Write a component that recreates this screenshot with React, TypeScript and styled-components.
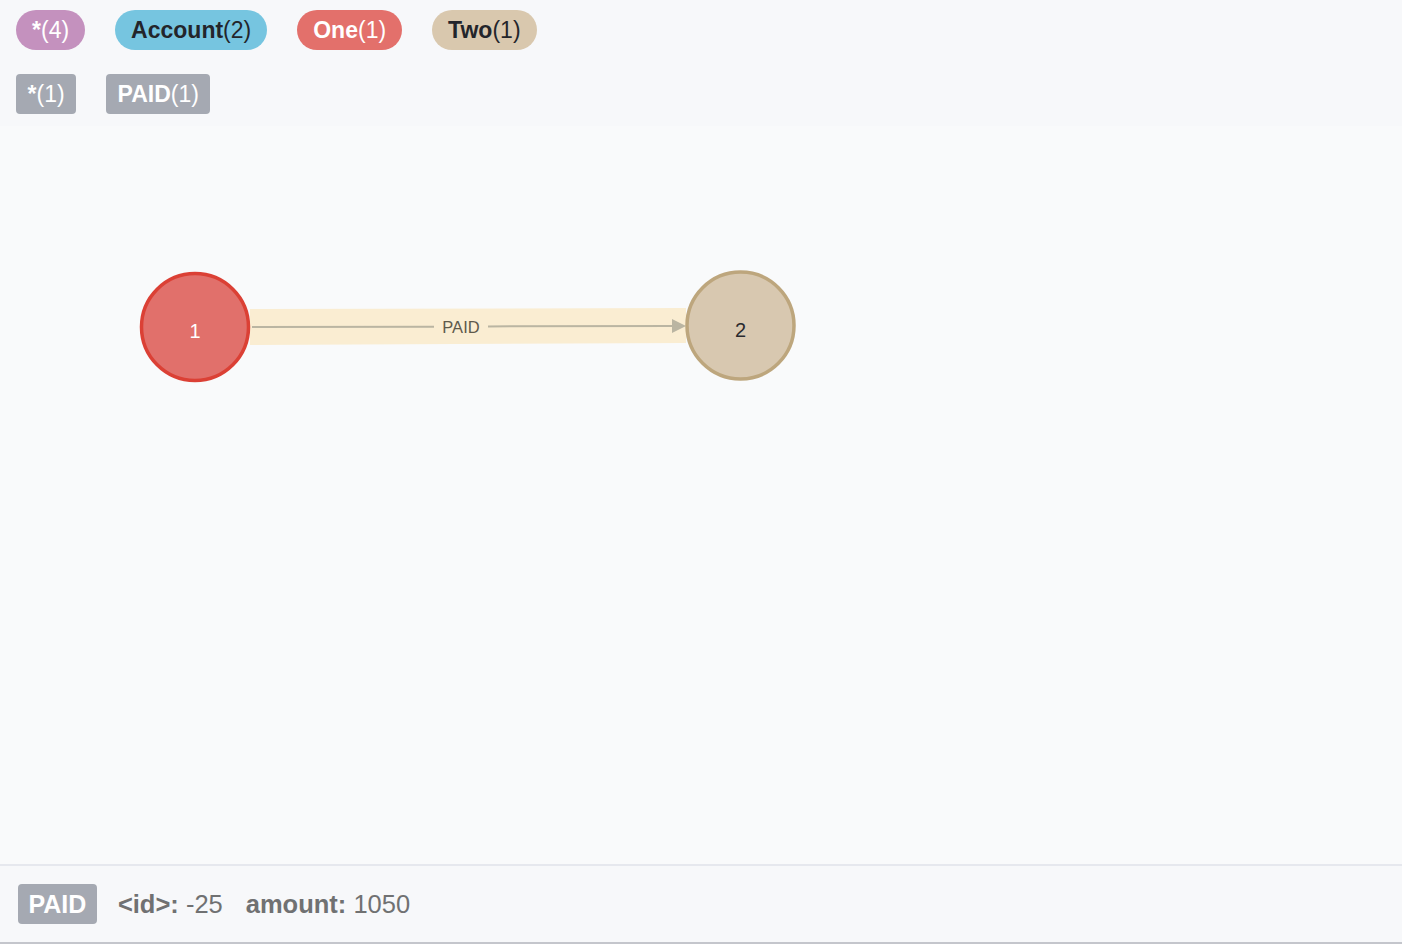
import React from "react";
import styled, { createGlobalStyle } from "styled-components";

const Global = createGlobalStyle`
  html, body { margin: 0; padding: 0; }
  body { font-family: "Liberation Sans", Arial, sans-serif; background: #f9fafb; }
`;

const Page = styled.div`
  width: 1402px;
  height: 944px;
  display: flex;
  flex-direction: column;
  overflow: hidden;
`;

const Header = styled.div`
  background: #f7f8fa;
  padding: 10px 16px 12px;
  display: flex;
  flex-direction: column;
  gap: 24px;
`;

const Row = styled.div`
  display: flex;
  gap: 30px;
`;

const Pill = styled.span<{ $bg: string; $fg: string; $round?: boolean }>`
  display: inline-flex;
  align-items: center;
  height: 40px;
  box-sizing: border-box;
  padding: ${(p) => (p.$round ? "0 16px" : "0 11.5px")};
  border-radius: ${(p) => (p.$round ? "20px" : "4px")};
  background: ${(p) => p.$bg};
  color: ${(p) => p.$fg};
  font-size: 23px;
  line-height: 1;
  white-space: nowrap;
`;

const Strong = styled.b`
  font-weight: 700;
`;

const Canvas = styled.div`
  flex: 1;
  background: #f9fafb;
  position: relative;
`;

const Graph = styled.svg`
  display: block;
  width: 100%;
  height: 100%;
`;

const Footer = styled.div`
  height: 76px;
  border-top: 2px solid #e6e8ee;
  border-bottom: 2px solid #c4c6cc;
  background: #f7f8fa;
  display: flex;
  align-items: center;
  padding: 0 18px;
  gap: 21px;
  color: #707172;
  font-size: 25.5px;
`;

const Badge = styled.span`
  display: inline-flex;
  align-items: center;
  height: 40px;
  padding: 0 10.5px;
  border-radius: 4px;
  background: #a5a9b2;
  color: #ffffff;
  font-weight: 700;
  font-size: 25px;
`;

const Prop = styled.span`
  margin-right: 2px;
  white-space: nowrap;
`;

const labels = [
  { name: "*", count: 4, bg: "#c491be", fg: "#ffffff" },
  { name: "Account", count: 2, bg: "#76c5e0", fg: "#23252b" },
  { name: "One", count: 1, bg: "#e3706b", fg: "#ffffff" },
  { name: "Two", count: 1, bg: "#d9c8ae", fg: "#23252b" },
];

const rels = [
  { name: "*", count: 1 },
  { name: "PAID", count: 1 },
];

export default function App() {
  return (
    <Page>
      <Global />
      <Header>
        <Row>
          {labels.map((l) => (
            <Pill key={l.name} $bg={l.bg} $fg={l.fg} $round>
              <Strong>{l.name}</Strong>({l.count})
            </Pill>
          ))}
        </Row>
        <Row>
          {rels.map((r) => (
            <Pill key={r.name} $bg="#a5a9b2" $fg="#ffffff">
              <Strong>{r.name}</Strong>({r.count})
            </Pill>
          ))}
        </Row>
      </Header>
      <Canvas>
        <Graph viewBox="0 0 1402 738">
          <polygon points="250,183 686,182 686,217 250,219" fill="#faedd2" />
          <line x1="252" y1="201" x2="434" y2="200.7" stroke="#bab5a2" strokeWidth="2" />
          <line x1="488" y1="200.4" x2="674" y2="200" stroke="#bab5a2" strokeWidth="2" />
          <polygon points="672,193 686,200 672,207" fill="#bab5a2" />
          <text
            x="461"
            y="206.5"
            textAnchor="middle"
            fontFamily="Liberation Sans, Arial, sans-serif"
            fontSize="16.5"
            fill="#5f5a4c"
          >
            PAID
          </text>
          <circle cx="195" cy="201" r="53.5" fill="#e1706b" stroke="#db4035" strokeWidth="3.5" />
          <text
            x="195"
            y="212"
            textAnchor="middle"
            fontFamily="Liberation Sans, Arial, sans-serif"
            fontSize="20"
            fill="#ffffff"
          >
            1
          </text>
          <circle cx="740.5" cy="199.5" r="53.5" fill="#d8c8b0" stroke="#bda67d" strokeWidth="3.5" />
          <text
            x="740.5"
            y="210.5"
            textAnchor="middle"
            fontFamily="Liberation Sans, Arial, sans-serif"
            fontSize="20"
            fill="#2a2a2e"
          >
            2
          </text>
        </Graph>
      </Canvas>
      <Footer>
        <Badge>PAID</Badge>
        <Prop>
          <Strong>&lt;id&gt;:</Strong> -25
        </Prop>
        <Prop>
          <Strong>amount:</Strong> 1050
        </Prop>
      </Footer>
    </Page>
  );
}
